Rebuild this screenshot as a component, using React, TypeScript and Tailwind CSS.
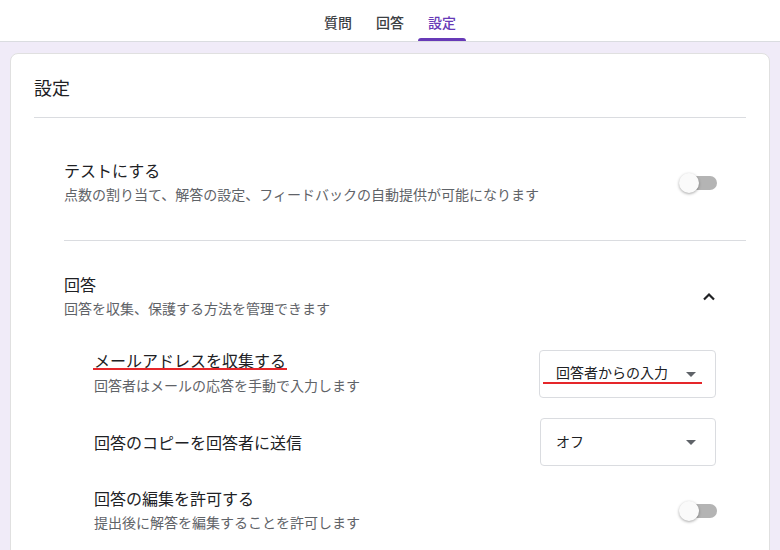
import React from "react";

function Toggle({ className = "" }: { className?: string }) {
  return (
    <div className={"relative w-[38px] h-[20px] flex items-center " + className}>
      <div className="absolute left-[9px] right-0 h-[14px] rounded-full bg-[#b4b4b4]" />
      <div className="absolute left-0 w-[20px] h-[20px] rounded-full bg-[#fafafa] shadow-[0_1px_3px_rgba(0,0,0,0.35)]" />
    </div>
  );
}

function Caret() {
  return (
    <svg width="10" height="5" viewBox="0 0 10 5">
      <path d="M0 0 L10 0 L5 5 Z" fill="#5f6368" />
    </svg>
  );
}

export default function App() {
  return (
    <div
      className="w-[780px] h-[550px] overflow-hidden bg-[#f0ebf8] text-[#202124]"
      style={{ fontFamily: '"Noto Sans CJK JP", "Noto Sans", sans-serif' }}
    >
      <div className="h-[42px] bg-white border-b border-[#dadce0] flex justify-center items-end gap-[4px]">
        <div className="w-[48px] h-[41px] flex flex-col items-center justify-between">
          <span className="text-[14px] leading-[20px] mt-[12px] text-[#3c4043] font-medium">質問</span>
          <span className="h-[3px]" />
        </div>
        <div className="w-[48px] h-[41px] flex flex-col items-center justify-between">
          <span className="text-[14px] leading-[20px] mt-[12px] text-[#3c4043] font-medium">回答</span>
          <span className="h-[3px]" />
        </div>
        <div className="w-[48px] h-[41px] flex flex-col items-center justify-between">
          <span className="text-[14px] leading-[20px] mt-[12px] text-[#673ab7] font-medium">設定</span>
          <span className="w-full h-[3px] rounded-t-[3px] bg-[#673ab7]" />
        </div>
      </div>

      <div className="px-[10px] pt-[11px]">
        <div className="bg-white rounded-[8px] border border-[#e0e0e0] h-[520px] px-[23px]">
          <div className="pt-[20px] pb-[17px] border-b border-[#dadce0]">
            <div className="text-[18px] leading-[26px]">設定</div>
          </div>

          <div className="pl-[30px]">
            <div className="pt-[40px] pb-[36px] border-b border-[#dadce0] flex items-center pr-[29px]">
              <div className="flex-1">
                <div className="text-[16px] leading-[24px]">テストにする</div>
                <div className="text-[14px] leading-[20px] mt-[2px] text-[#5f6368]">
                  点数の割り当て、解答の設定、フィードバックの自動提供が可能になります
                </div>
              </div>
              <Toggle className="mt-[4px]" />
            </div>

            <div className="pt-[31px]">
              <div className="flex items-center pr-[30px]">
                <div className="flex-1">
                  <div className="text-[16px] leading-[24px]">回答</div>
                  <div className="text-[14px] leading-[20px] mt-[2px] text-[#5f6368]">
                    回答を収集、保護する方法を管理できます
                  </div>
                </div>
                <svg width="14" height="10" viewBox="0 0 14 10" className="mt-[3px]">
                  <path d="M2 7.5 L7 2.5 L12 7.5" stroke="#202124" strokeWidth="2.2" fill="none" />
                </svg>
              </div>

              <div className="pl-[30px] pr-[30px]">
                <div className="mt-[32px] flex items-start">
                  <div className="flex-1 relative mt-[-2px]">
                    <div className="text-[16px] leading-[24px]">メールアドレスを収集する</div>
                    <div className="text-[14px] leading-[20px] mt-[3px] text-[#5f6368]">
                      回答者はメールの応答を手動で入力します
                    </div>
                    <div className="absolute left-[-1px] top-[20px] w-[194px] h-[2px] bg-[#e5262a]" />
                  </div>
                  <div className="relative w-[177px] h-[48px] border border-[#dadce0] rounded-[4px] flex items-center pl-[16px] pr-[19px]">
                    <span className="flex-1 text-[14px] leading-[20px] mb-[4px]">回答者からの入力</span>
                    <Caret />
                    <div className="absolute left-[3px] top-[31px] w-[159px] h-[2px] bg-[#e5262a]" />
                  </div>
                </div>

                <div className="mt-[20px] flex items-center">
                  <div className="flex-1 text-[16px] leading-[24px]">回答のコピーを回答者に送信</div>
                  <div className="w-[176px] h-[48px] border border-[#dadce0] rounded-[4px] flex items-center pl-[15px] pr-[19px]">
                    <span className="flex-1 text-[14px] leading-[20px] mb-[3px]">オフ</span>
                    <Caret />
                  </div>
                </div>

                <div className="mt-[20px] flex items-center">
                  <div className="flex-1 pb-[2px]">
                    <div className="text-[16px] leading-[24px]">回答の編集を許可する</div>
                    <div className="text-[14px] leading-[20px] mt-[2px] text-[#5f6368]">
                      提出後に解答を編集することを許可します
                    </div>
                  </div>
                  <Toggle className="mt-[2px] mr-[-1px]" />
                </div>
              </div>
            </div>
          </div>
        </div>
      </div>
    </div>
  );
}
